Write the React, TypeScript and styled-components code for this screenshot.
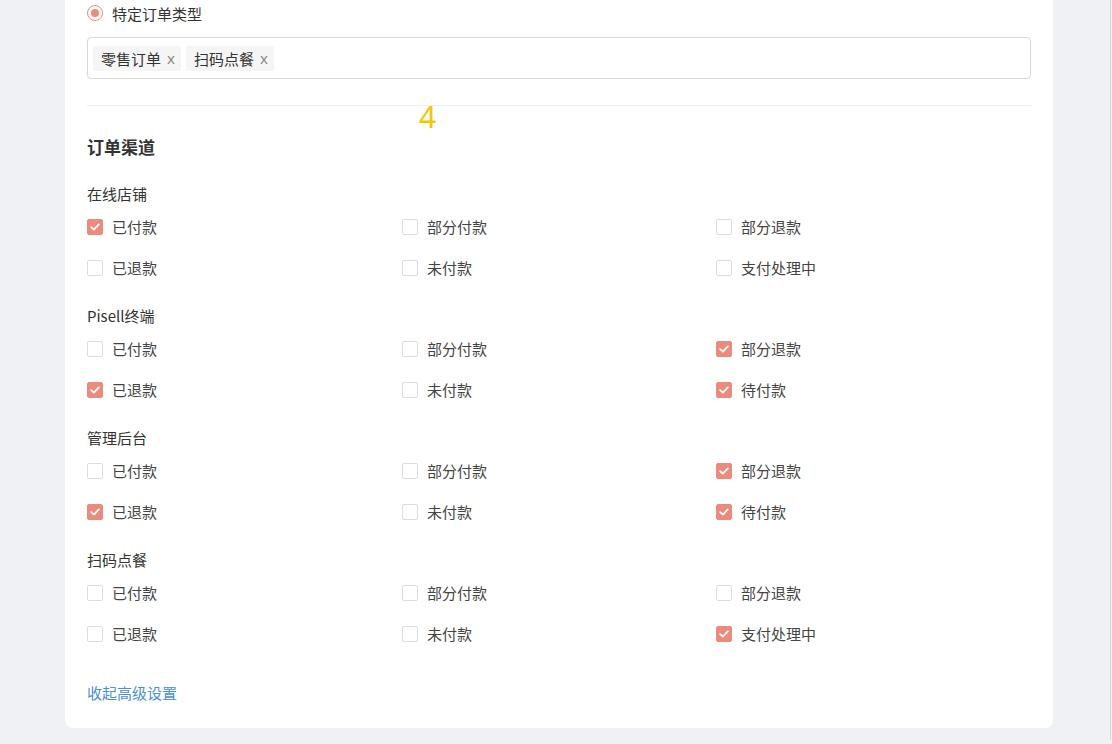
import styled, { createGlobalStyle } from 'styled-components';

const GlobalStyle = createGlobalStyle`
  html, body {
    margin: 0;
    padding: 0;
    background: #f0f1f5;
    font-family: "Noto Sans CJK SC", "Noto Sans", sans-serif;
    color: #333;
  }
  * { box-sizing: border-box; }
`;

type Channel = {
  title: string;
  items: { label: string; checked: boolean }[];
};

const channels: Channel[] = [
  {
    title: '在线店铺',
    items: [
      { label: '已付款', checked: true },
      { label: '部分付款', checked: false },
      { label: '部分退款', checked: false },
      { label: '已退款', checked: false },
      { label: '未付款', checked: false },
      { label: '支付处理中', checked: false },
    ],
  },
  {
    title: 'Pisell终端',
    items: [
      { label: '已付款', checked: false },
      { label: '部分付款', checked: false },
      { label: '部分退款', checked: true },
      { label: '已退款', checked: true },
      { label: '未付款', checked: false },
      { label: '待付款', checked: true },
    ],
  },
  {
    title: '管理后台',
    items: [
      { label: '已付款', checked: false },
      { label: '部分付款', checked: false },
      { label: '部分退款', checked: true },
      { label: '已退款', checked: true },
      { label: '未付款', checked: false },
      { label: '待付款', checked: true },
    ],
  },
  {
    title: '扫码点餐',
    items: [
      { label: '已付款', checked: false },
      { label: '部分付款', checked: false },
      { label: '部分退款', checked: false },
      { label: '已退款', checked: false },
      { label: '未付款', checked: false },
      { label: '支付处理中', checked: true },
    ],
  },
];

export default function App() {
  return (
    <Page>
      <GlobalStyle />
      <Card>
        <RadioRow>
          <Radio />
          <span>特定订单类型</span>
        </RadioRow>
        <SelectBox>
          <Tag>
            零售订单<TagClose>x</TagClose>
          </Tag>
          <Tag>
            扫码点餐<TagClose>x</TagClose>
          </Tag>
        </SelectBox>
        <Divider />
        <StepMark>4</StepMark>
        <SectionTitle>订单渠道</SectionTitle>
        <Groups>
          {channels.map((ch) => (
            <Group key={ch.title}>
              <GroupTitle>{ch.title}</GroupTitle>
              <OptionGrid>
                {ch.items.map((it) => (
                  <Option key={it.label}>
                    <Box $checked={it.checked}>
                      {it.checked && (
                        <svg width="10" height="8" viewBox="0 0 10 8">
                          <path d="M1.2 4.1 L3.9 6.6 L8.8 1.4" fill="none" stroke="#fff" strokeWidth="1.8" strokeLinecap="round" strokeLinejoin="round" />
                        </svg>
                      )}
                    </Box>
                    <OptionText>{it.label}</OptionText>
                  </Option>
                ))}
              </OptionGrid>
            </Group>
          ))}
        </Groups>
        <Link>收起高级设置</Link>
      </Card>
      <ScrollEdge />
    </Page>
  );
}

const Page = styled.div`
  position: relative;
  height: 744px;
  padding-left: 65px;
  overflow: hidden;
`;

const ScrollEdge = styled.div`
  position: absolute;
  right: 0;
  top: 0;
  width: 2px;
  height: 740px;
  border-left: 1px solid #d8d9dd;
`;

const Card = styled.div`
  position: relative;
  width: 988px;
  height: 728px;
  background: #fff;
  border-radius: 0 0 8px 8px;
  padding: 2px 22px 0;
`;

const RadioRow = styled.div`
  display: flex;
  align-items: center;
  gap: 9px;
  height: 22px;
  font-size: 15px;
  color: #333;
`;

const Radio = styled.span`
  width: 16px;
  height: 16px;
  border-radius: 50%;
  border: 1px solid #ec8a7d;
  display: flex;
  align-items: center;
  justify-content: center;
  &::after {
    content: '';
    width: 8px;
    height: 8px;
    border-radius: 50%;
    background: #ec8a7d;
  }
`;

const SelectBox = styled.div`
  margin-top: 13px;
  height: 42px;
  border: 1px solid #d9d9d9;
  border-radius: 4px;
  padding: 0 5px;
  display: flex;
  align-items: center;
  gap: 5px;
`;

const Tag = styled.span`
  display: inline-flex;
  align-items: center;
  height: 25px;
  padding: 0 6px 0 8px;
  background: #f5f5f5;
  border-radius: 2px;
  font-size: 15px;
  color: #333;
`;

const TagClose = styled.span`
  margin-left: 6px;
  font-family: "Noto Sans", "Liberation Sans", sans-serif;
  font-size: 15px;
  line-height: 1;
  color: #888;
`;

const Divider = styled.div`
  margin-top: 26px;
  height: 1px;
  background: #eeeeee;
`;

const StepMark = styled.div`
  position: absolute;
  left: 354px;
  top: 97px;
  font-family: "Noto Sans", "Liberation Sans", sans-serif;
  font-size: 30px;
  line-height: 40px;
  color: #f7c400;
`;

const SectionTitle = styled.h3`
  margin: 28px 0 0;
  font-size: 17px;
  line-height: 26px;
  font-weight: 700;
  color: #333;
`;

const Groups = styled.div`
  margin-top: 23px;
  display: flex;
  flex-direction: column;
  gap: 26px;
`;

const Group = styled.div`
  display: flex;
  flex-direction: column;
  gap: 11px;
`;

const GroupTitle = styled.div`
  font-size: 15px;
  line-height: 22px;
  color: #333;
`;

const OptionGrid = styled.div`
  display: grid;
  grid-template-columns: 315px 314px 1fr;
  row-gap: 19px;
`;

const Option = styled.label`
  display: flex;
  align-items: center;
  gap: 9px;
  height: 22px;
  font-size: 15px;
  color: #444;
`;

const OptionText = styled.span`
  position: relative;
  top: -1px;
`;

const Box = styled.span<{ $checked: boolean }>`
  width: 16px;
  height: 16px;
  border-radius: 2px;
  display: flex;
  align-items: center;
  justify-content: center;
  background: ${(p) => (p.$checked ? '#ec8a7d' : '#fff')};
  border: 1px solid ${(p) => (p.$checked ? '#ec8a7d' : '#dcdcdc')};
`;

const Link = styled.a`
  display: block;
  margin-top: 37px;
  font-size: 15px;
  line-height: 22px;
  color: #4a90d9;
  cursor: pointer;
`;
